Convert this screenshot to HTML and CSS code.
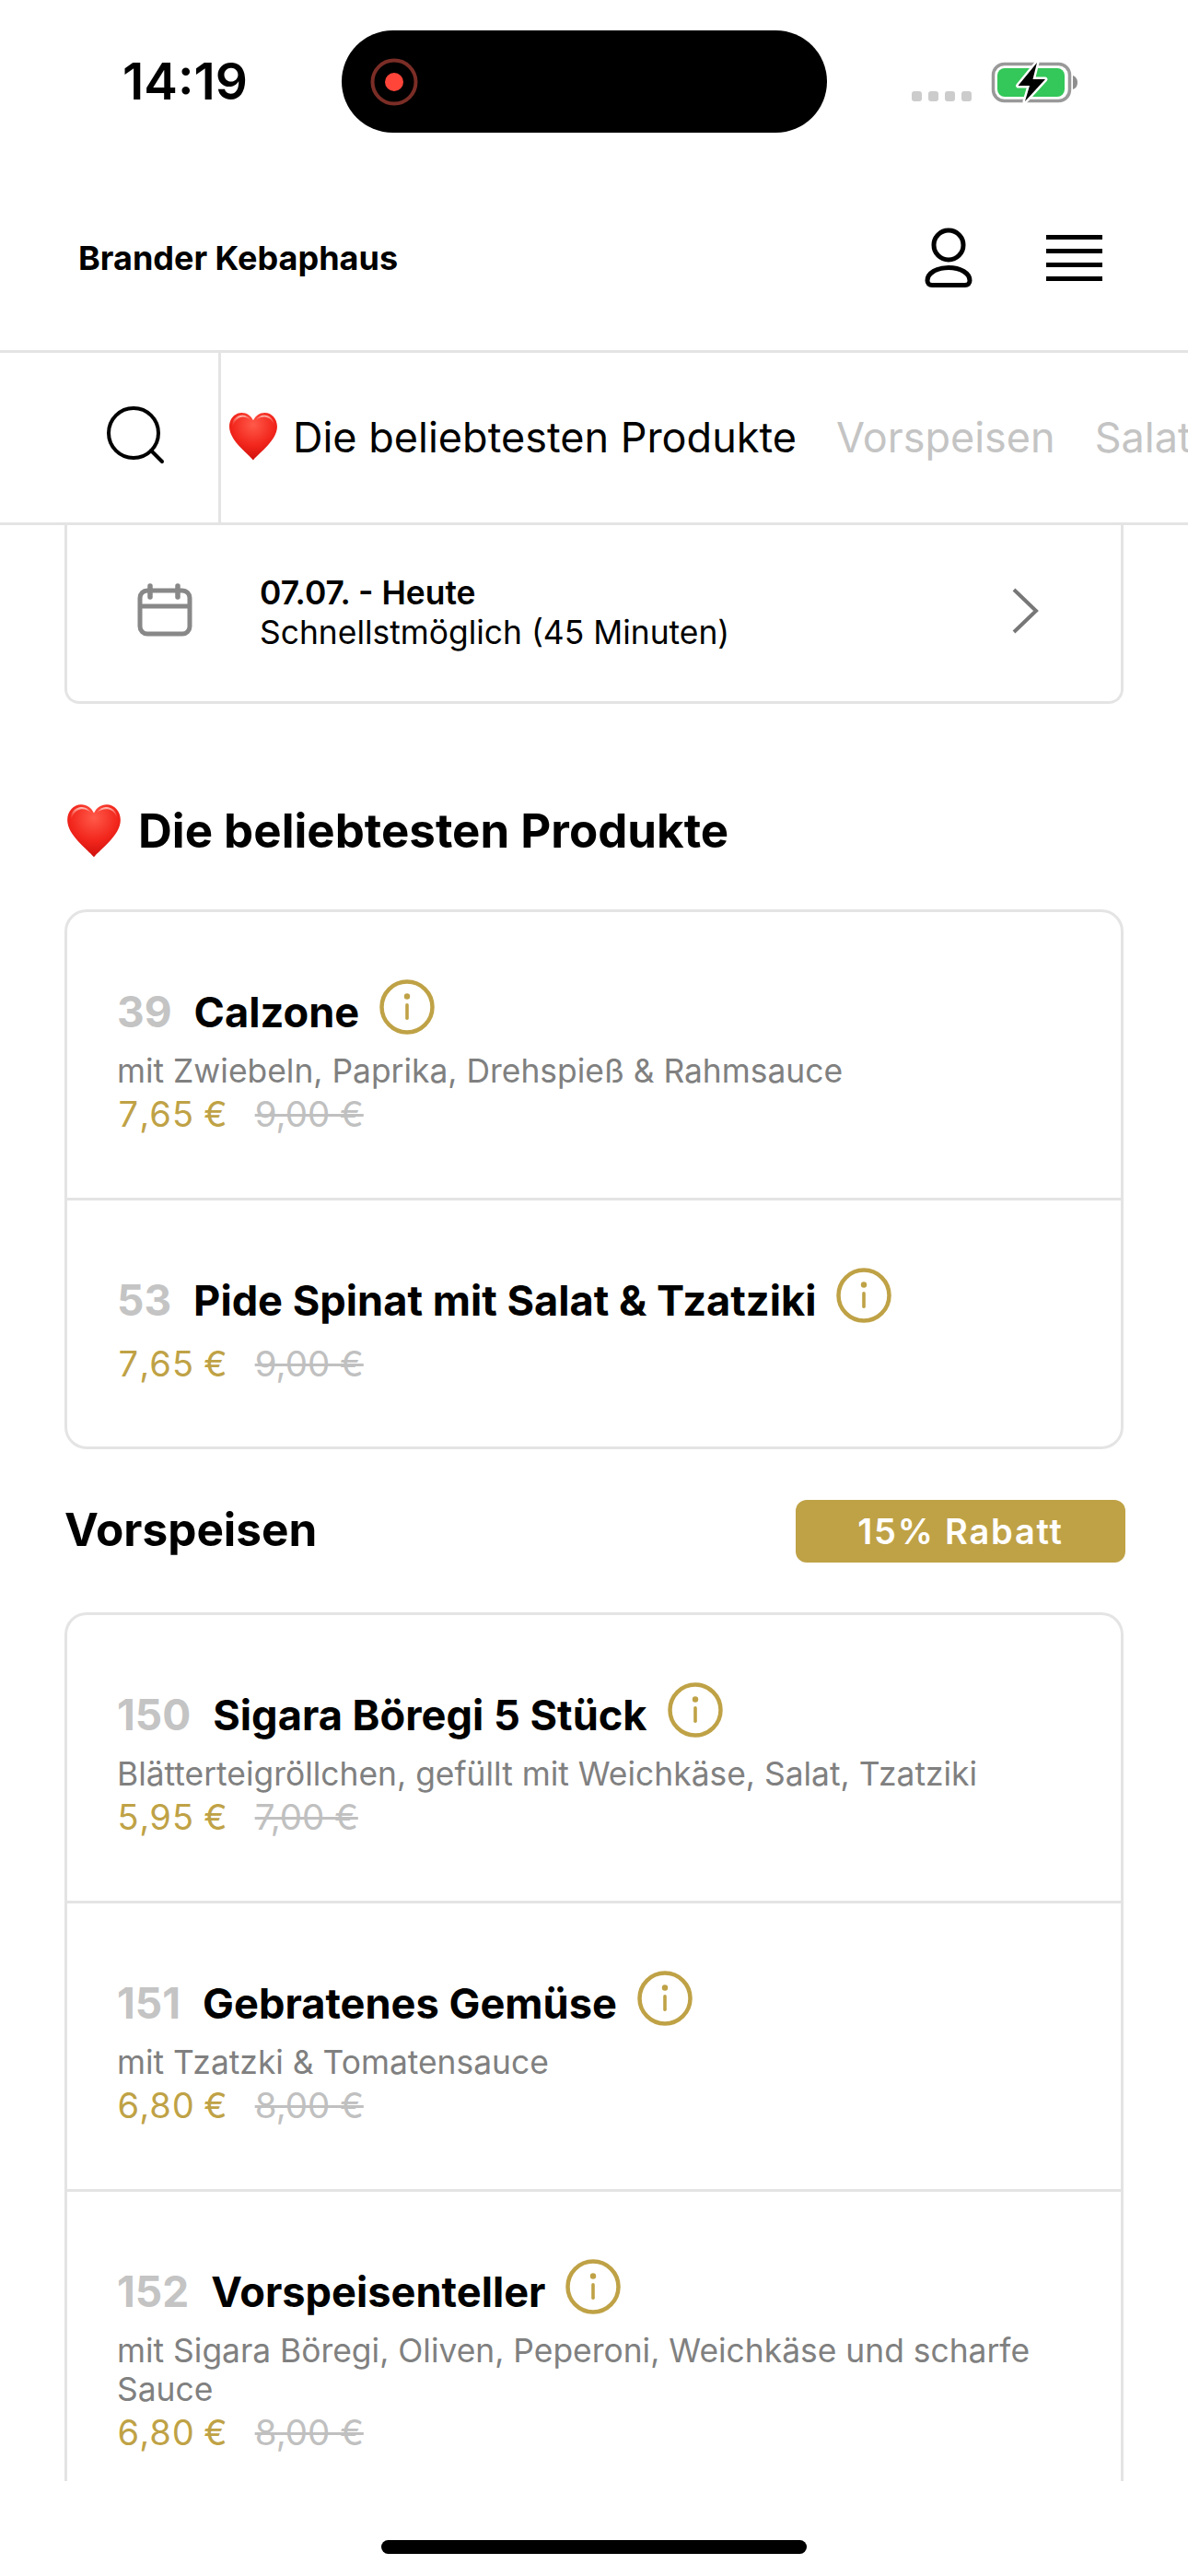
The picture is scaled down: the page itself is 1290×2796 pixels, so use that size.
FILE: index.html
```html
<!DOCTYPE html>
<html lang="de">
<head>
<meta charset="utf-8">
<title>Brander Kebaphaus</title>
<link rel="stylesheet" href="styles.css">
</head>
<body>
<svg class="defs" width="0" height="0" aria-hidden="true">
  <defs>
    <radialGradient id="hg" cx="50%" cy="25%" r="80%">
      <stop offset="0" stop-color="#ff5a4a"/>
      <stop offset="0.55" stop-color="#f2261c"/>
      <stop offset="1" stop-color="#c90d0a"/>
    </radialGradient>
    <linearGradient id="hl" x1="0" y1="0" x2="0" y2="1">
      <stop offset="0" stop-color="#ffd0c8" stop-opacity=".95"/>
      <stop offset="1" stop-color="#ff6050" stop-opacity="0"/>
    </linearGradient>
    <symbol id="heart" viewBox="0 0 52 52">
      <path d="M26 50.5C20 43 1 30 1 15.5 1 7 7 1 14 1c5.500 0 9.500 3 12 8 2.500-5 6.500-8 12-8 7 0 13 6 13 14.500C51 30 32 43 26 50.500Z" fill="url(#hg)"/>
      <path d="M4 15C4 8 9 3.500 14.500 3.500c3.500 0 6.500 2 8.500 5-3-2.500-6-3.500-9-3-4.500.8-8 4.500-9 9.500ZM29 8.500c2-3 5-5 8.500-5C43 3.500 48 8 48 15c-1-5-4.500-8.700-9-9.500-3-.5-7 .5-10 3Z" fill="url(#hl)"/>
    </symbol>
    <symbol id="info" viewBox="0 0 60 60">
      <circle cx="30" cy="30" r="27.500" fill="none" stroke="#bfa246" stroke-width="4.500"/>
      <circle cx="30" cy="18.500" r="3.200" fill="#bfa246"/>
      <rect x="28.200" y="26" width="3.600" height="18" rx="1.800" fill="#bfa246"/>
    </symbol>
  </defs>
</svg>

<div class="phone">
  <div class="status">
    <span class="time">14:19</span>
    <div class="island">
      <svg class="rec" viewBox="0 0 52 52" width="52" height="52">
        <circle cx="26" cy="26" r="23.500" fill="none" stroke="#7a2d26" stroke-width="4"/>
        <circle cx="26" cy="26" r="10" fill="#ff453a"/>
      </svg>
    </div>
    <svg class="indicators" viewBox="0 0 182 52" width="182" height="52">
      <rect x="0" y="36" width="11" height="11" rx="3" fill="#cccccc"/>
      <rect x="18" y="36" width="11" height="11" rx="3" fill="#cccccc"/>
      <rect x="36" y="36" width="11" height="11" rx="3" fill="#cccccc"/>
      <rect x="54" y="36" width="11" height="11" rx="3" fill="#cccccc"/>
      <rect x="88.500" y="6.500" width="83" height="40" rx="12" fill="none" stroke="#999999" stroke-width="3.500"/>
      <path d="M175 19c3 1 5 3.500 5 7.500s-2 6.500-5 7.500Z" fill="#8e8e8e"/>
      <rect x="93" y="11" width="73" height="31" rx="8" fill="#34c759"/>
      <path d="M136 5 115.500 30H128L123 47 145 23H131.500Z" fill="#000" stroke="#fff" stroke-width="5" stroke-linejoin="round" paint-order="stroke"/>
    </svg>
  </div>

  <header class="top">
    <span class="brand">Brander Kebaphaus</span>
    <div class="top-icons">
      <svg class="user" viewBox="0 0 56 68" width="56" height="68">
        <circle cx="28" cy="20" r="16" fill="none" stroke="#000" stroke-width="5"/>
        <path d="M28 44.500c-13 0-23 6-23 14 0 3 2 5 5 5h36c3 0 5-2 5-5 0-8-10-14-23-14Z" fill="none" stroke="#000" stroke-width="5"/>
      </svg>
      <div class="burger"><i></i><i></i><i></i><i></i></div>
    </div>
  </header>

  <nav class="tabs">
    <div class="search">
      <svg viewBox="0 0 64 68" width="64" height="68">
        <circle cx="29" cy="29" r="27" fill="none" stroke="#000" stroke-width="4"/>
        <path d="M48 48 60 60" stroke="#000" stroke-width="4" stroke-linecap="round"/>
      </svg>
    </div>
    <div class="tab-list">
      <span class="tab active"><svg class="heart-sm"><use href="#heart"/></svg>Die beliebtesten Produkte</span>
      <span class="tab">Vorspeisen</span>
      <span class="tab">Salate</span>
    </div>
  </nav>

  <main class="content">
    <div class="card slot">
      <svg class="cal" viewBox="0 0 60 60" width="60" height="60">
        <rect x="3" y="8" width="54" height="47" rx="8" fill="none" stroke="#888" stroke-width="5"/>
        <path d="M3 25H57" stroke="#888" stroke-width="5"/>
        <path d="M14 3V15M44 3V15" stroke="#888" stroke-width="5.500" stroke-linecap="round"/>
      </svg>
      <div class="slot-text">
        <strong>07.07. - Heute</strong>
        <span>Schnellstmöglich (45 Minuten)</span>
      </div>
      <svg class="chev" viewBox="0 0 30 50" width="30" height="50">
        <path d="M3 2 27 25 3 48" fill="none" stroke="#777" stroke-width="4"/>
      </svg>
    </div>

    <h2 class="sec-pop"><svg class="heart-lg"><use href="#heart"/></svg>Die beliebtesten Produkte</h2>

    <section class="card list">
      <article class="item">
        <div class="item-title"><span class="num">39</span><span class="name">Calzone</span><svg class="info"><use href="#info"/></svg></div>
        <p class="desc">mit Zwiebeln, Paprika, Drehspieß &amp; Rahmsauce</p>
        <p class="price"><span class="now">7,65 €</span><s class="old">9,00 €</s></p>
      </article>
      <article class="item">
        <div class="item-title"><span class="num">53</span><span class="name">Pide Spinat mit Salat &amp; Tzatziki</span><svg class="info"><use href="#info"/></svg></div>
        <p class="price"><span class="now">7,65 €</span><s class="old">9,00 €</s></p>
      </article>
    </section>

    <div class="sec-head">
      <h2>Vorspeisen</h2>
      <span class="badge">15% Rabatt</span>
    </div>

    <section class="card list open">
      <article class="item">
        <div class="item-title"><span class="num">150</span><span class="name">Sigara Böregi 5 Stück</span><svg class="info"><use href="#info"/></svg></div>
        <p class="desc">Blätterteigröllchen, gefüllt mit Weichkäse, Salat, Tzatziki</p>
        <p class="price"><span class="now">5,95 €</span><s class="old">7,00 €</s></p>
      </article>
      <article class="item">
        <div class="item-title"><span class="num">151</span><span class="name">Gebratenes Gemüse</span><svg class="info"><use href="#info"/></svg></div>
        <p class="desc">mit Tzatzki &amp; Tomatensauce</p>
        <p class="price"><span class="now">6,80 €</span><s class="old">8,00 €</s></p>
      </article>
      <article class="item">
        <div class="item-title"><span class="num">152</span><span class="name">Vorspeisenteller</span><svg class="info"><use href="#info"/></svg></div>
        <p class="desc">mit Sigara Böregi, Oliven, Peperoni, Weichkäse und scharfe Sauce</p>
        <p class="price"><span class="now">6,80 €</span><s class="old">8,00 €</s></p>
      </article>
    </section>
  </main>

  <div class="home"><span></span></div>
</div>
</body>
</html>
```
FILE: styles.css
```css
* { box-sizing: border-box; }
html, body { margin: 0; padding: 0; background: #fff; }
body { font-family: Inter, "Liberation Sans", sans-serif; color: #000; }
.defs { display: block; height: 0; }
.phone { width: 1290px; height: 2796px; display: flex; flex-direction: column; overflow: hidden; background: #fff; }

.status { height: 177px; flex: none; display: flex; align-items: center; padding-left: 133px; }
.time { width: 238px; font-size: 55px; font-weight: 600; line-height: 1; }
.island { width: 527px; height: 111px; border-radius: 56px; background: #000; display: flex; align-items: center; padding-left: 31px; }
.rec { display: block; }
.indicators { margin-left: 92px; margin-top: 0; display: block; }

.top { height: 206px; flex: none; display: flex; align-items: center; justify-content: space-between; padding: 3px 93px 0 85px; border-bottom: 3px solid #e4e4e4; }
.brand { font-size: 36px; font-weight: 700; }
.top-icons { display: flex; align-items: center; gap: 78px; }
.user { display: block; }
.burger { width: 61px; display: flex; flex-direction: column; gap: 10.300px; }
.burger i { display: block; height: 5px; background: #000; }

.tabs { height: 187px; flex: none; display: flex; border-bottom: 3px solid #e4e4e4; overflow: hidden; }
.search { width: 240px; flex: none; border-right: 3px solid #e4e4e4; display: flex; align-items: center; justify-content: center; padding-left: 58px; }
.tab-list { display: flex; align-items: center; gap: 43px; padding: 0 0 2px 8px; white-space: nowrap; }
.tab { font-size: 45px; color: #c4c4c4; display: flex; align-items: center; }
.tab.active { color: #000; }
.heart-sm { width: 54px; height: 54px; margin-right: 16px; }

.content { height: 2123px; flex: none; overflow: hidden; padding: 0 70px; }
.card { border: 3px solid #e4e4e4; border-radius: 24px; background: #fff; }
.slot { height: 194px; border-top: 0; border-radius: 0 0 16px 16px; display: flex; align-items: center; padding: 0 89px 5px 76px; }
.cal { flex: none; }
.slot-text { flex: 1; margin-left: 73px; padding-top: 4px; display: flex; flex-direction: column; font-size: 35.400px; line-height: 43px; }
.slot-text strong { font-weight: 600; }
.chev { flex: none; }

.sec-pop { margin: 108px 0 55px; font-size: 51px; line-height: 60px; font-weight: 700; display: flex; align-items: center; }
.heart-lg { width: 64px; height: 60px; margin-right: 16px; }

.item { padding: 74px 55px 66px 54px; border-bottom: 3px solid #e4e4e4; }
.item:last-child { border-bottom: 0; padding-bottom: 65px; }
.item-title { display: flex; align-items: center; height: 60px; margin-bottom: 18px; }
.num { font-size: 46px; font-weight: 700; color: #c4c4c4; margin-right: 24px; padding-top: 8px; }
.name { font-size: 45.200px; font-weight: 700; padding-top: 8px; }
.info { width: 60px; height: 60px; margin-left: 22px; margin-top: -2px; flex: none; }
.desc { margin: 0; font-size: 35.400px; line-height: 42px; color: #808080; }
.price { margin: 0; font-size: 38px; line-height: 50px; display: flex; gap: 30px; }
.now { color: #bfa246; font-variant-numeric: tabular-nums; }
.old { color: #c0c0c0; font-size: 38.500px; }

.sec-head { display: flex; align-items: center; justify-content: space-between; margin: 55px 0 54px; }
.sec-head h2 { margin: 0; padding-bottom: 4px; font-size: 49.500px; font-weight: 700; line-height: 64px; }
.badge { width: 358px; height: 68px; margin-right: -2px; background: #bfa246; color: #fff; border-radius: 12px; font-size: 38px; font-weight: 600; letter-spacing: 1.800px; display: flex; align-items: center; justify-content: center; }

.open { border-bottom: 0; border-radius: 24px 24px 0 0; }

.home { flex: 1; display: flex; justify-content: center; padding-top: 64px; }
.home span { width: 462px; height: 15px; border-radius: 8px; background: #000; }
```
